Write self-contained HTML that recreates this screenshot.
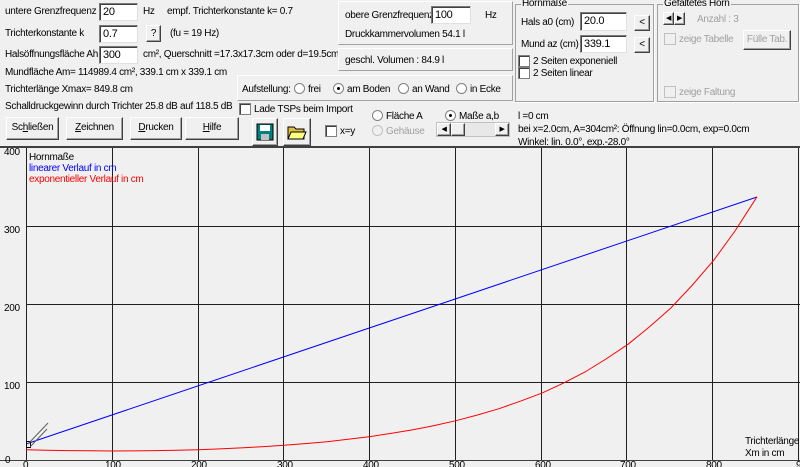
<!DOCTYPE html>
<html><head><meta charset="utf-8"><style>
*{margin:0;padding:0;box-sizing:border-box}
body{width:800px;height:467px;background:#f0f0f0;font:10px "Liberation Sans",Arial,sans-serif;letter-spacing:-0.3px;color:#000;position:relative;overflow:hidden}
.a{position:absolute;white-space:nowrap}
.in{position:absolute;background:#fff;border:1px solid #7a7a7a;border-right-color:#e0e0e0;border-bottom-color:#e0e0e0;box-shadow:inset 1px 1px 0 #404040;padding:2px 3px;font-size:11px;white-space:nowrap}
.btn{position:absolute;background:#f0f0f0;border:1px solid;border-color:#fff #404040 #404040 #fff;box-shadow:inset -1px -1px 0 #a0a0a0;text-align:center;font-size:10px;white-space:nowrap}
.pan{position:absolute;border:1px solid;border-color:#fff #a0a0a0 #a0a0a0 #fff}
.grp{position:absolute;border:1px solid #a0a0a0;box-shadow:1px 1px 0 #fff}
.grp>span{position:absolute;top:-7px;left:5px;background:#f0f0f0;padding:0 1px;white-space:nowrap}
.cb{position:absolute;width:12px;height:12px;background:#fff;border:1px solid #808080;box-shadow:inset 1px 1px 0 #404040}
.rd{position:absolute;width:11px;height:11px;border-radius:50%;background:#fff;border:1px solid #808080}
.rd.on::after{content:"";position:absolute;left:3px;top:3px;width:3px;height:3px;border-radius:50%;background:#000}
.dis{color:#a0a0a0}
</style></head><body>
<div class="a" style="left:5px;top:6px">untere Grenzfrequenz</div>
<div class="in" style="left:99px;top:3px;width:39px;height:18px">20</div>
<div class="a" style="left:143px;top:6px">Hz</div>
<div class="a" style="left:167px;top:6px">empf. Trichterkonstante k= 0.7</div>
<div class="a" style="left:5px;top:28px">Trichterkonstante k</div>
<div class="in" style="left:99px;top:25px;width:39px;height:18px">0.7</div>
<div class="btn" style="left:146px;top:25px;width:15px;height:17px;line-height:15px">?</div>
<div class="a" style="left:170px;top:28px">(fu = 19 Hz)</div>
<div class="a" style="left:5px;top:49px">Halsöffnungsfläche Ah</div>
<div class="in" style="left:99px;top:46px;width:39px;height:18px">300</div>
<div class="a" style="left:143px;top:49px">cm², Querschnitt =17.3x17.3cm oder d=19.5cm</div>
<div class="a" style="left:5px;top:67px">Mundfläche Am= 114989.4 cm², 339.1 cm x 339.1 cm</div>
<div class="a" style="left:5px;top:84px">Trichterlänge Xmax= 849.8 cm</div>
<div class="a" style="left:5px;top:101px">Schalldruckgewinn durch Trichter 25.8 dB auf 118.5 dB</div>

<div class="pan" style="left:338px;top:1px;width:175px;height:44px"></div>
<div class="a" style="left:345px;top:10px">obere Grenzfrequenz</div>
<div class="in" style="left:431px;top:6px;width:40px;height:18px">100</div>
<div class="a" style="left:485px;top:10px">Hz</div>
<div class="a" style="left:345px;top:29px">Druckkammervolumen 54.1 l</div>
<div class="pan" style="left:338px;top:48px;width:175px;height:23px"></div>
<div class="a" style="left:345px;top:55px">geschl. Volumen : 84.9 l</div>
<div class="pan" style="left:237px;top:75px;width:276px;height:26px"></div>
<div class="a" style="left:242px;top:84px">Aufstellung:</div>
<div class="rd" style="left:294px;top:83px"></div><div class="a" style="left:308px;top:84px">frei</div>
<div class="rd on" style="left:333px;top:83px"></div><div class="a" style="left:347px;top:84px">am Boden</div>
<div class="rd" style="left:398px;top:83px"></div><div class="a" style="left:412px;top:84px">an Wand</div>
<div class="rd" style="left:456px;top:83px"></div><div class="a" style="left:470px;top:84px">in Ecke</div>

<div class="cb" style="left:239px;top:103px"></div><div class="a" style="left:254px;top:104px">Lade TSPs beim Import</div>
<div class="btn" style="left:6px;top:117px;width:53px;height:23px;line-height:20px">Sc<u>h</u>ließen</div>
<div class="btn" style="left:66px;top:117px;width:57px;height:23px;line-height:20px"><u>Z</u>eichnen</div>
<div class="btn" style="left:130px;top:117px;width:52px;height:23px;line-height:20px"><u>D</u>rucken</div>
<div class="btn" style="left:185px;top:117px;width:54px;height:23px;line-height:20px"><u>H</u>ilfe</div>
<div class="btn" style="left:252px;top:118px;width:26px;height:28px"><svg width="18" height="18" style="margin-top:4px"><rect x="1" y="1" width="16" height="16" fill="#008080" stroke="#000"/><rect x="4" y="2" width="10" height="6" fill="#fff"/><rect x="5" y="11" width="8" height="6" fill="#c0c0c0"/></svg></div>
<div class="btn" style="left:283px;top:118px;width:28px;height:28px"><svg width="20" height="16" style="margin-top:5px"><path d="M1 3h6l2 2h8v10H1z" fill="#e0c040" stroke="#000"/><path d="M4 8h15l-3 7H1z" fill="#ffff80" stroke="#000"/></svg></div>
<div class="cb" style="left:325px;top:125px"></div><div class="a" style="left:340px;top:126px">x=y</div>
<div class="rd" style="left:372px;top:110px"></div><div class="a" style="left:386px;top:111px">Fläche A</div>
<div class="rd" style="left:372px;top:125px;border-color:#c0c0c0;background:#f0f0f0"></div><div class="a dis" style="left:386px;top:126px">Gehäuse</div>
<div class="rd on" style="left:445px;top:110px"></div><div class="a" style="left:459px;top:111px">Maße a,b</div>
<div class="a" style="left:436px;top:122px;width:74px;height:15px;background:#e8e8e8;border:1px solid #c0c0c0"></div>
<div class="btn" style="left:437px;top:123px;width:14px;height:13px;font-size:7px;line-height:11px">◀</div>
<div class="btn" style="left:451px;top:123px;width:14px;height:13px"></div>
<div class="btn" style="left:495px;top:123px;width:14px;height:13px;font-size:7px;line-height:11px">▶</div>
<div class="a" style="left:518px;top:111px">l =0 cm</div>
<div class="a" style="left:518px;top:124px">bei x=2.0cm, A=304cm²: Öffnung lin=0.0cm, exp=0.0cm</div>
<div class="a" style="left:518px;top:137px">Winkel: lin. 0.0°, exp.-28.0°</div>

<div class="grp" style="left:515px;top:4px;width:139px;height:98px"><span>Hornmaße</span></div>
<div class="a" style="left:521px;top:17px">Hals a0 (cm)</div>
<div class="in" style="left:580px;top:12px;width:47px;height:19px">20.0</div>
<div class="btn" style="left:634px;top:15px;width:16px;height:16px;line-height:13px">&lt;</div>
<div class="a" style="left:521px;top:39px">Mund az (cm)</div>
<div class="in" style="left:580px;top:35px;width:47px;height:18px">339.1</div>
<div class="btn" style="left:634px;top:37px;width:16px;height:16px;line-height:13px">&lt;</div>
<div class="cb" style="left:518px;top:55px"></div><div class="a" style="left:533px;top:56px">2 Seiten exponeniell</div>
<div class="cb" style="left:518px;top:67px"></div><div class="a" style="left:533px;top:68px">2 Seiten linear</div>

<div class="grp" style="left:657px;top:4px;width:142px;height:98px"><span>Gefaltetes Horn</span></div>
<div class="btn" style="left:663px;top:12px;width:11px;height:13px;font-size:7px;line-height:11px">◀</div>
<div class="btn" style="left:674px;top:12px;width:11px;height:13px;font-size:7px;line-height:11px">▶</div>
<div class="a dis" style="left:697px;top:14px">Anzahl : 3</div>
<div class="cb" style="left:664px;top:33px;border-color:#c0c0c0;background:#f0f0f0;box-shadow:none"></div><div class="a dis" style="left:679px;top:34px">zeige Tabelle</div>
<div class="btn dis" style="left:743px;top:30px;width:48px;height:20px;line-height:17px">Fülle Tab.</div>
<div class="cb" style="left:664px;top:86px;border-color:#c0c0c0;background:#f0f0f0;box-shadow:none"></div><div class="a dis" style="left:679px;top:87px">zeige Faltung</div>

<svg class="a" style="left:0;top:145px" width="800" height="322" viewBox="0 145 800 322">
<line x1="0" y1="147" x2="800" y2="147" stroke="#404040" stroke-width="2"/>
<g stroke="#202020" stroke-width="1" fill="none">
<path d="M26.5 148V460M112.5 148V460M198.5 148V460M283.5 148V460M369.5 148V460M455.5 148V460M541.5 148V460M626.5 148V460M712.5 148V460M798.5 148V460"/>
<path d="M26 226.5H800M26 304.5H800M26 382.5H800"/>
</g>
<line x1="0" y1="460.5" x2="800" y2="460.5" stroke="#404040"/>
<g font-size="10" letter-spacing="-0.3" font-family="Liberation Sans,Arial,sans-serif">
<text x="4" y="155">400</text><text x="4" y="233">300</text><text x="4" y="311">200</text><text x="4" y="389">100</text><text x="5" y="463">0</text>
<text x="23" y="468">0</text><text x="105" y="468">100</text><text x="191" y="468">200</text><text x="277" y="468">300</text><text x="363" y="468">400</text><text x="449" y="468">500</text><text x="535" y="468">600</text><text x="620" y="468">700</text><text x="706" y="468">800</text><text x="796" y="468">900</text>
<text x="29" y="160">Hornmaße</text>
<text x="29" y="171" fill="#0000ff">linearer Verlauf in cm</text>
<text x="29" y="182" fill="#ff0000">exponentieller Verlauf in cm</text>
<text x="745" y="444">Trichterlänge</text>
<text x="745" y="456">Xm in cm</text>
</g>
<line x1="26" y1="444" x2="757" y2="197" stroke="#0000ff"/>
<polyline fill="none" stroke="#ff0000" points="26,449.7 47,450.2 69,450.6 90,450.8 112,451 134,450.9 155,450.6 176,450.2 198,449.7 220,448.9 241,447.9 262,446.7 284,445.3 305,443.6 327,441.7 348,439.3 370,436.6 391,433.4 413,429.8 434,425.6 456,420.7 477,415.1 499,408.7 520,401.3 542,393.1 563,383.3 585,372 606,359 628,344.3 649,327.3 671,307.9 692,285.5 714,259.9 735,231 757,196.8"/>
<rect x="26.5" y="441.5" width="4" height="6" fill="none" stroke="#000"/>
<line x1="28" y1="444" x2="48" y2="423" stroke="#606060"/>
<line x1="30" y1="447" x2="47" y2="429" stroke="#606060"/>
</svg>
</body></html>
